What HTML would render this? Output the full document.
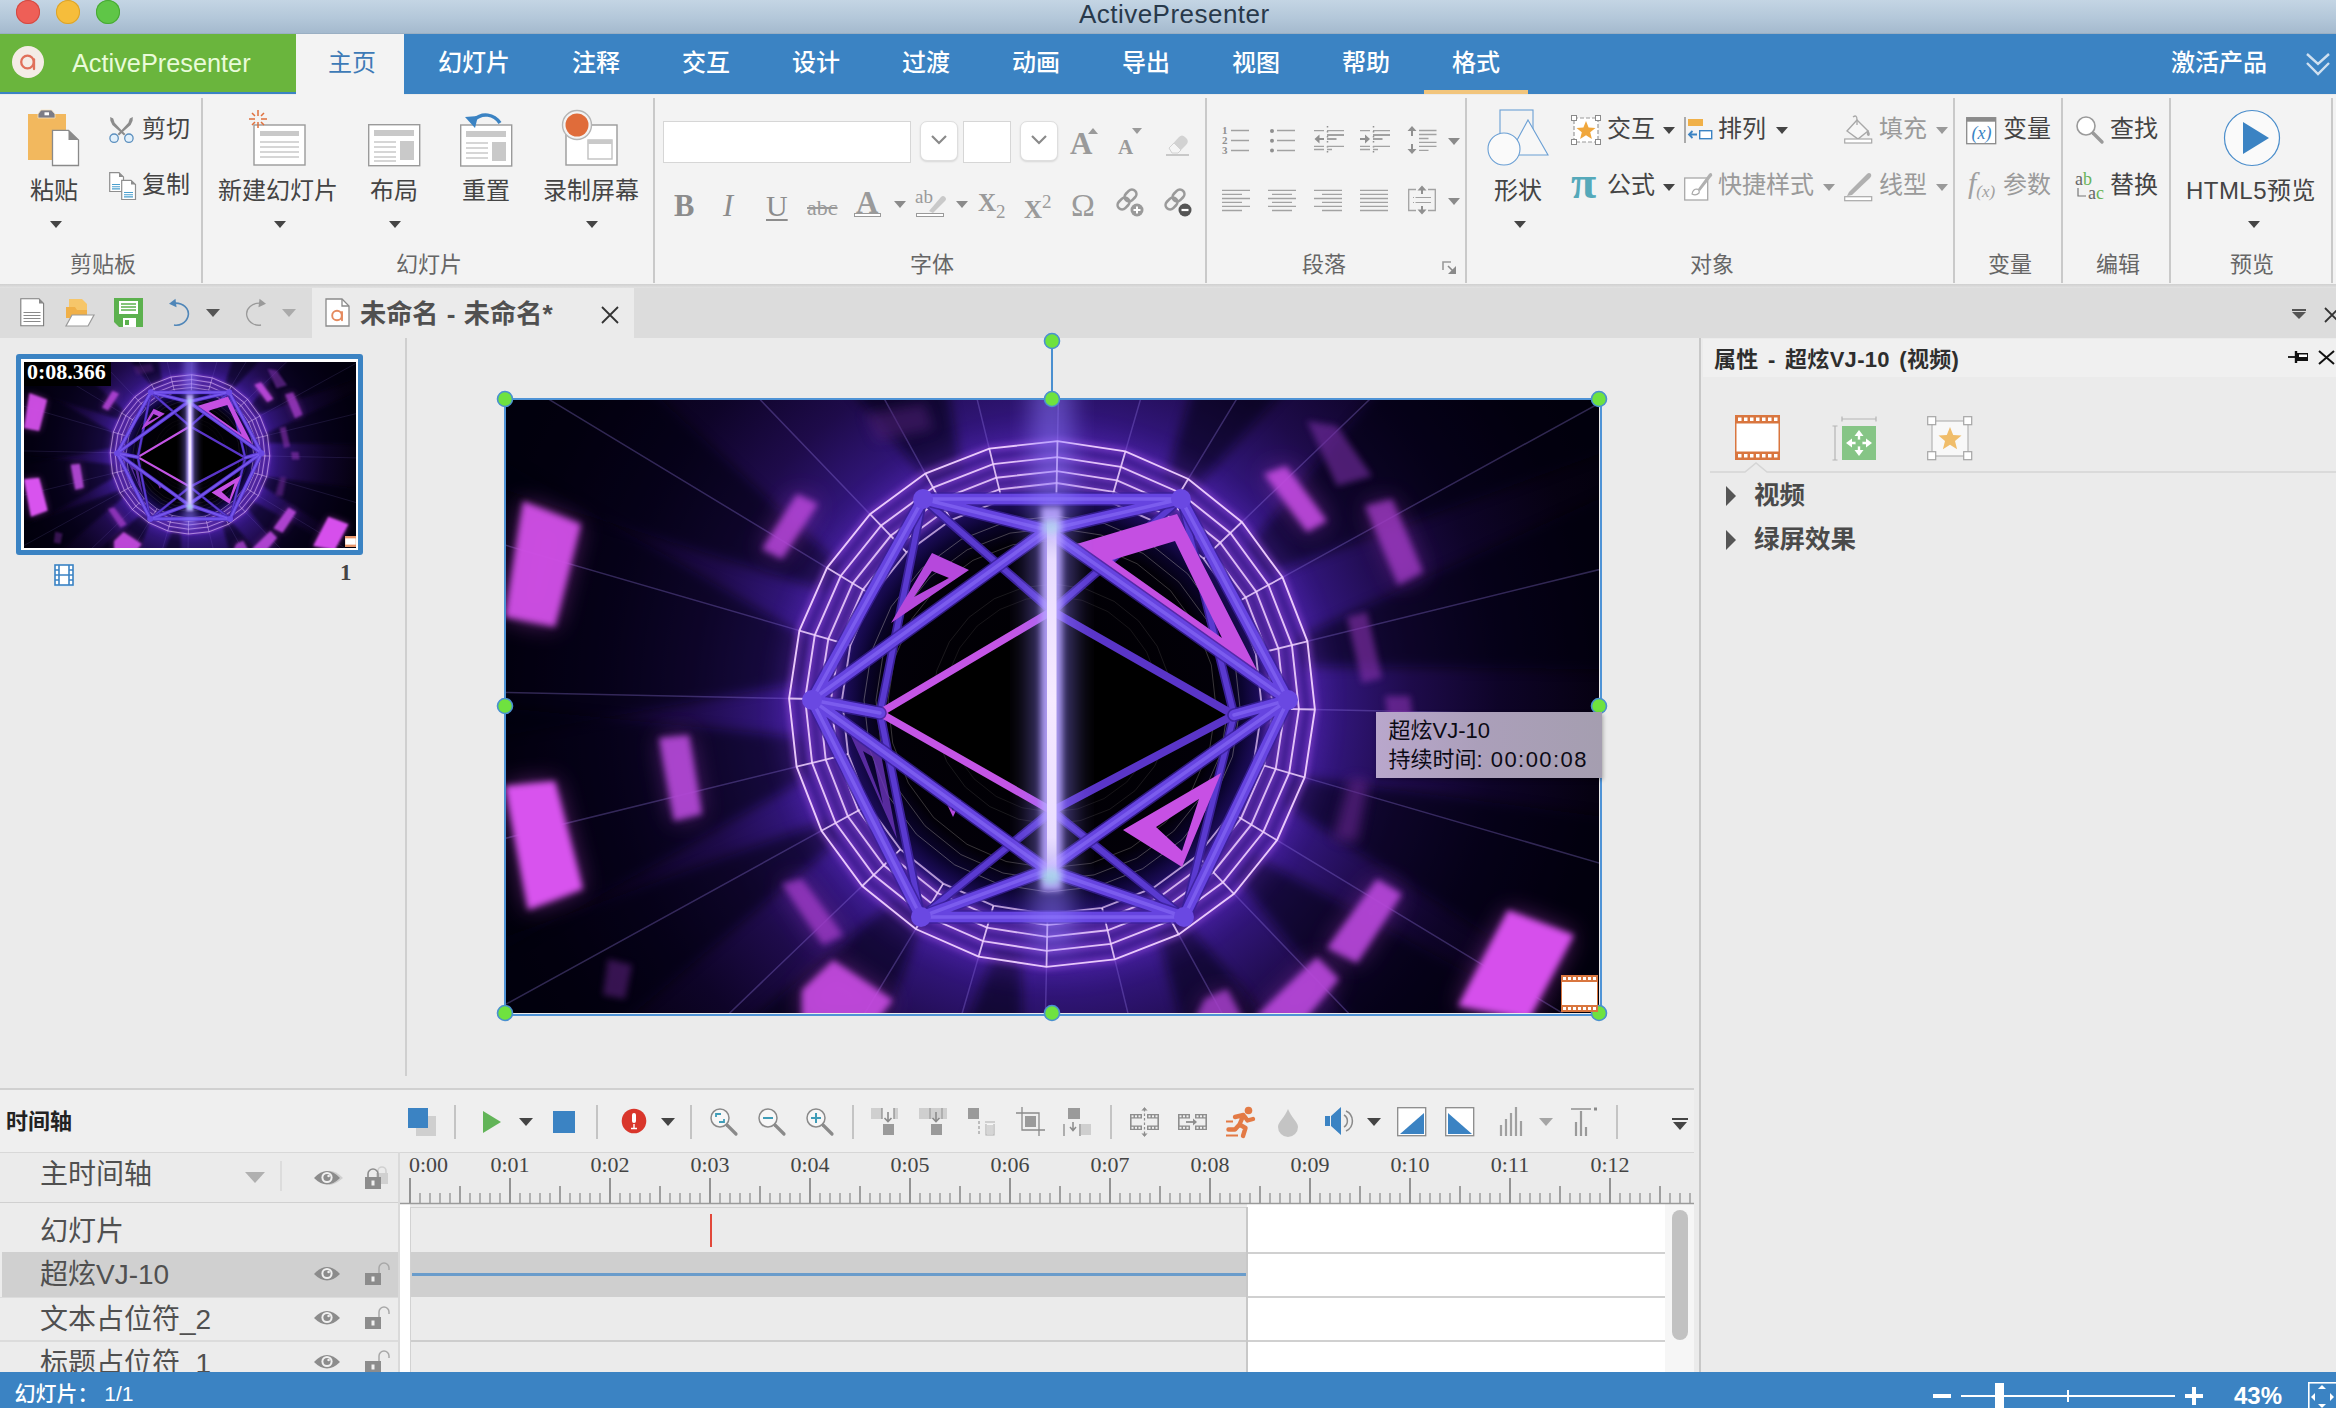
<!DOCTYPE html>
<html lang="zh"><head><meta charset="utf-8"><title>ActivePresenter</title>
<style>
html,body{margin:0;padding:0}
body{width:2336px;height:1408px;position:relative;overflow:hidden;background:#ebebeb;font-family:"Liberation Sans","Noto Sans CJK SC",sans-serif;color:#333}
.a{position:absolute}
.t{position:absolute;white-space:nowrap;line-height:1}
svg{position:absolute;overflow:visible}
.serif{font-family:"Liberation Serif","Noto Serif CJK SC",serif}
.vsep{position:absolute;width:2px;background:#c9c9c9}
.rl{font-size:24px;color:#444}
.gl{font-size:22px;color:#666}
.dis{color:#9a9a9a}
.mt{font-size:24px;color:#fff;top:51px;font-weight:500}
.arr{position:absolute;width:0;height:0;border-left:6px solid transparent;border-right:6px solid transparent;border-top:7px solid #444}
.arrg{border-top-color:#999}
.tl{font-size:28px;color:#505050}
.rt{font-size:22px;color:#444;font-family:"Liberation Serif",serif}
</style></head><body>
<!-- title bar -->
<div class="a" style="left:0;top:0;width:2336px;height:34px;background:linear-gradient(#c4d5e4 0%,#b3c7d9 55%,#a5bace 96%,#94a9bd 100%)"></div>
<div class="a" style="left:16px;top:0;width:24px;height:24px;border-radius:50%;background:#ee5f57;box-shadow:inset 0 0 0 1px #d24a42"></div>
<div class="a" style="left:56px;top:0;width:24px;height:24px;border-radius:50%;background:#f6bd3b;box-shadow:inset 0 0 0 1px #dba32b"></div>
<div class="a" style="left:96px;top:0;width:24px;height:24px;border-radius:50%;background:#5fc647;box-shadow:inset 0 0 0 1px #47a835"></div>
<div class="t" style="left:1079px;top:0.5px;font-size:26px;letter-spacing:0.47px;color:#28394b">ActivePresenter</div>
<!-- menu bar -->
<div class="a" style="left:0;top:34px;width:2336px;height:60px;background:#3b83c3"></div>
<div class="a" style="left:0;top:34px;width:296px;height:58px;background:#6ab53d"></div>
<div class="a" style="left:296px;top:34px;width:108px;height:62px;background:#f3f3f3"></div>
<div class="a" style="left:1424px;top:90px;width:104px;height:4px;background:#f2c57c"></div>
<div class="a" style="left:12px;top:46px;width:32px;height:32px;border-radius:50%;background:#f4ece6"></div>
<svg style="left:12px;top:46px" width="32" height="32" viewBox="0 0 32 32"><circle cx="15.5" cy="16" r="6.3" fill="none" stroke="#e0705a" stroke-width="2.3"/><path d="M22 13.5V23" stroke="#e0705a" stroke-width="2.3" stroke-linecap="round"/></svg>
<div class="t" style="left:72px;top:51px;font-size:25.3px;color:#e9fbd9">ActivePresenter</div>
<div class="t mt" style="left:328px;color:#3d7ab6;font-weight:400">主页</div>
<div class="t mt" style="left:438px">幻灯片</div>
<div class="t mt" style="left:572px">注释</div>
<div class="t mt" style="left:682px">交互</div>
<div class="t mt" style="left:792px">设计</div>
<div class="t mt" style="left:902px">过渡</div>
<div class="t mt" style="left:1012px">动画</div>
<div class="t mt" style="left:1122px">导出</div>
<div class="t mt" style="left:1232px">视图</div>
<div class="t mt" style="left:1342px">帮助</div>
<div class="t mt" style="left:1452px">格式</div>
<div class="t mt" style="left:2171px">激活产品</div>
<svg style="left:2304px;top:50px" width="28" height="28" viewBox="0 0 28 28"><path d="M3 4 L14 14 L25 4 M3 13 L14 24 L25 13" fill="none" stroke="#cfe0f0" stroke-width="2.4"/></svg>
<!-- ribbon bg -->
<div class="a" style="left:0;top:95px;width:2336px;height:189px;background:#f3f3f3"></div>
<div class="a" style="left:0;top:284px;width:2336px;height:4px;background:linear-gradient(#cfcfcf,#e2e2e2)"></div>
<div class="vsep" style="left:201px;top:98px;height:185px"></div>
<div class="vsep" style="left:653px;top:98px;height:185px"></div>
<div class="vsep" style="left:1205px;top:98px;height:185px"></div>
<div class="vsep" style="left:1465px;top:98px;height:185px"></div>
<div class="vsep" style="left:1953px;top:98px;height:185px"></div>
<div class="vsep" style="left:2061px;top:98px;height:185px"></div>
<div class="vsep" style="left:2169px;top:98px;height:185px"></div>
<div class="vsep" style="left:2331px;top:98px;height:185px"></div>
<!-- toolbar row -->
<div class="a" style="left:0;top:288px;width:2336px;height:50px;background:#dcdcdc"></div>
<div class="a" style="left:312px;top:288px;width:322px;height:50px;background:#ebebeb"></div>
<!-- panels -->
<div class="a" style="left:405px;top:338px;width:2px;height:738px;background:#cfcfcf"></div>
<div class="a" style="left:1699px;top:338px;width:2px;height:1034px;background:#c8c8c8"></div>
<div class="a" style="left:1703px;top:339px;width:633px;height:38px;background:#f0f0f0"></div>
<!-- timeline -->
<div class="a" style="left:0;top:1088px;width:1694px;height:2px;background:#d0d0d0"></div>
<div class="a" style="left:0;top:1090px;width:1694px;height:62px;background:#efefef"></div>
<svg width="0" height="0" style="left:0;top:0"><defs>
<radialGradient id="gbg" cx="547" cy="305" r="620" gradientUnits="userSpaceOnUse">
<stop offset="0" stop-color="#22106a"/><stop offset="0.34" stop-color="#24116c"/><stop offset="0.43" stop-color="#361888"/><stop offset="0.48" stop-color="#2e1472"/><stop offset="0.58" stop-color="#1e0b4a"/><stop offset="0.72" stop-color="#0e0428"/><stop offset="0.88" stop-color="#060112"/><stop offset="1" stop-color="#03000c"/></radialGradient>
<radialGradient id="ghole" cx="547" cy="305" r="212" gradientUnits="userSpaceOnUse">
<stop offset="0" stop-color="#000"/><stop offset="0.78" stop-color="#020008"/><stop offset="0.9" stop-color="#0b0430"/><stop offset="0.97" stop-color="#180a50" stop-opacity="0.85"/><stop offset="1" stop-color="#2a1270" stop-opacity="0"/></radialGradient>
<linearGradient id="gbeam" x1="0" y1="0" x2="0" y2="1"><stop offset="0" stop-color="#fff" stop-opacity="0"/><stop offset="0.12" stop-color="#e9dcff"/><stop offset="0.5" stop-color="#f6eaff"/><stop offset="0.88" stop-color="#e9dcff"/><stop offset="1" stop-color="#fff" stop-opacity="0"/></linearGradient>
<linearGradient id="gdk" x1="0" y1="0" x2="1" y2="0"><stop offset="0" stop-color="#000" stop-opacity="0.55"/><stop offset="0.25" stop-color="#000" stop-opacity="0"/><stop offset="0.8" stop-color="#000" stop-opacity="0"/><stop offset="1" stop-color="#000" stop-opacity="0.45"/></linearGradient>
<filter id="b3" x="-30%" y="-30%" width="160%" height="160%"><feGaussianBlur stdDeviation="3"/></filter>
<filter id="b6" x="-30%" y="-30%" width="160%" height="160%"><feGaussianBlur stdDeviation="6"/></filter>
<filter id="b12" x="-50%" y="-50%" width="200%" height="200%"><feGaussianBlur stdDeviation="12"/></filter>
<filter id="b1" x="-10%" y="-10%" width="120%" height="120%"><feGaussianBlur stdDeviation="0.8"/></filter>
<clipPath id="cpv"><rect x="0" y="0" width="1094" height="614"/></clipPath>
<symbol id="vid" viewBox="0 0 1094 614" preserveAspectRatio="none"><g clip-path="url(#cpv)">
<rect width="1094" height="614" fill="#04000f"/>
<rect width="1094" height="614" fill="url(#gbg)"/>
<polygon points="293,284 -348,399 -262,-90 301,238" fill="#02000a" opacity="0.55" filter="url(#b6)"/>
<polygon points="319,191 -299,-3 -142,-274 334,165" fill="#02000a" opacity="0.55" filter="url(#b6)"/>
<polygon points="303,378 -262,700 -352,274 294,338" fill="#02000a" opacity="0.55" filter="url(#b6)"/>
<polygon points="745,145 1161,-353 1375,-47 766,174" fill="#02000a" opacity="0.55" filter="url(#b6)"/>
<polygon points="793,238 1381,-32 1446,274 799,267" fill="#02000a" opacity="0.55" filter="url(#b6)"/>
<polygon points="791,378 1433,461 1326,755 781,406" fill="#02000a" opacity="0.55" filter="url(#b6)"/>
<polygon points="751,458 1318,769 1137,984 733,479" fill="#02000a" opacity="0.55" filter="url(#b6)"/>
<polygon points="416,524 195,1133 -111,919 387,503" fill="#02000a" opacity="0.55" filter="url(#b6)"/>
<polygon points="332,443 -162,859 -287,642 320,422" fill="#02000a" opacity="0.55" filter="url(#b6)"/>
<polygon points="661,77 855,-541 1126,-384 687,92" fill="#02000a" opacity="0.55" filter="url(#b6)"/>
<polygon points="423,82 5,-414 345,-572 456,67" fill="#02000a" opacity="0.55" filter="url(#b6)"/>
<polygon points="680,523 1101,1014 825,1161 653,537" fill="#02000a" opacity="0.55" filter="url(#b6)"/>
<polygon points="516,558 531,1205 254,1156 490,553" fill="#02000a" opacity="0.55" filter="url(#b6)"/>
<path d="M808.9 310.5 L1246.8 319.7 M798.6 378.1 L1219.2 500.3 M771.1 440.7 L1145.8 667.6 M728.3 494.1 L1031.5 810.2 M673.2 534.6 L884.2 918.4 M609.5 559.4 L714.0 984.8 M541.5 566.9 L532.3 1004.8 M473.9 556.6 L351.7 977.2 M411.3 529.1 L184.4 903.8 M357.9 486.3 L41.8 789.5 M317.4 431.2 L-66.4 642.2 M292.6 367.5 L-132.8 472.0 M285.1 299.5 L-152.8 290.3 M295.4 231.9 L-125.2 109.7 M322.9 169.3 L-51.8 -57.6 M365.7 115.9 L62.5 -200.2 M420.8 75.4 L209.8 -308.4 M484.5 50.6 L380.0 -374.8 M552.5 43.1 L561.7 -394.8 M620.1 53.4 L742.3 -367.2 M682.7 80.9 L909.6 -293.8 M736.1 123.7 L1052.2 -179.5 M776.6 178.8 L1160.4 -32.2 M801.4 242.5 L1226.8 138.0" stroke="#a88cff" stroke-width="1.5" opacity="0.28" fill="none"/>
<polygon points="18,102 76,125 50,228 0,218" fill="#d04fe6" opacity="0.45" filter="url(#b12)"/>
<polygon points="18,102 76,125 50,228 0,218" fill="#d04fe6" opacity="0.95" filter="url(#b3)"/>
<polygon points="0,387 50,382 78,490 23,511" fill="#d852ee" opacity="0.45" filter="url(#b12)"/>
<polygon points="0,387 50,382 78,490 23,511" fill="#d852ee" opacity="1" filter="url(#b3)"/>
<polygon points="292,95 313,105 277,160 257,150" fill="#b545d8" opacity="0.45" filter="url(#b12)"/>
<polygon points="292,95 313,105 277,160 257,150" fill="#b545d8" opacity="0.85" filter="url(#b3)"/>
<polygon points="154,339 184,336 197,415 169,422" fill="#b548d8" opacity="0.45" filter="url(#b12)"/>
<polygon points="154,339 184,336 197,415 169,422" fill="#b548d8" opacity="0.9" filter="url(#b3)"/>
<polygon points="277,485 297,480 338,536 318,546" fill="#a03ac8" opacity="0.45" filter="url(#b12)"/>
<polygon points="277,485 297,480 338,536 318,546" fill="#a03ac8" opacity="0.75" filter="url(#b3)"/>
<polygon points="297,591 328,561 388,601 373,620 297,620" fill="#c74be2" opacity="0.45" filter="url(#b12)"/>
<polygon points="297,591 328,561 388,601 373,620 297,620" fill="#c74be2" opacity="0.9" filter="url(#b3)"/>
<polygon points="802,22 832,27 867,77 832,87" fill="#7a2ea8" opacity="0.6" filter="url(#b3)"/>
<polygon points="759,75 781,67 822,122 802,133" fill="#c048de" opacity="0.45" filter="url(#b12)"/>
<polygon points="759,75 781,67 822,122 802,133" fill="#c048de" opacity="0.9" filter="url(#b3)"/>
<polygon points="860,107 887,100 918,173 893,186" fill="#a23bc6" opacity="0.45" filter="url(#b12)"/>
<polygon points="860,107 887,100 918,173 893,186" fill="#a23bc6" opacity="0.75" filter="url(#b3)"/>
<polygon points="842,218 862,213 877,279 857,284" fill="#8a30b0" opacity="0.6" filter="url(#b3)"/>
<polygon points="880,297 905,297 908,322 883,322" fill="#8a30b0" opacity="0.6" filter="url(#b3)"/>
<polygon points="872,480 897,495 852,564 822,549" fill="#b846da" opacity="0.45" filter="url(#b12)"/>
<polygon points="872,480 897,495 852,564 822,549" fill="#b846da" opacity="0.9" filter="url(#b3)"/>
<polygon points="1003,511 1069,536 1024,620 953,607" fill="#d650ec" opacity="0.45" filter="url(#b12)"/>
<polygon points="1003,511 1069,536 1024,620 953,607" fill="#d650ec" opacity="1" filter="url(#b3)"/>
<polygon points="812,558 834,580 800,620 750,618" fill="#b846da" opacity="0.45" filter="url(#b12)"/>
<polygon points="812,558 834,580 800,620 750,618" fill="#b846da" opacity="0.9" filter="url(#b3)"/>
<polygon points="700,600 722,590 738,620 690,620" fill="#a840cc" opacity="0.45" filter="url(#b12)"/>
<polygon points="700,600 722,590 738,620 690,620" fill="#a840cc" opacity="0.8" filter="url(#b3)"/>
<polygon points="103,560 127,566 120,600 98,596" fill="#6a2890" opacity="0.5" filter="url(#b3)"/>
<polygon points="360,15 420,5 428,30 372,42" fill="#55207c" opacity="0.5" filter="url(#b6)"/>
<polygon points="845,379 864,381 852,443 828,440" fill="#6a2894" opacity="0.6" filter="url(#b6)"/>
<circle cx="547" cy="305" r="244" fill="none" stroke="#7a38d8" stroke-width="56" opacity="0.22" filter="url(#b12)"/>
<circle cx="547" cy="305" r="212" fill="url(#ghole)"/>
<g filter="url(#b3)" opacity="0.55"><polygon points="809.9,310.5 799.6,378.4 772.0,441.2 729.0,494.8 673.7,535.5 609.7,560.4 541.5,567.9 473.6,557.6 410.8,530.0 357.2,487.0 316.5,431.7 291.6,367.7 284.1,299.5 294.4,231.6 322.0,168.8 365.0,115.2 420.3,74.5 484.3,49.6 552.5,42.1 620.4,52.4 683.2,80.0 736.8,123.0 777.5,178.3 802.4,242.3" fill="none" stroke="#b45cff" stroke-width="5"/><polygon points="793.9,310.2 784.2,373.9 758.3,433.0 718.0,483.3 666.0,521.4 605.9,544.9 541.8,551.9 478.1,542.2 419.0,516.3 368.7,476.0 330.6,424.0 307.1,363.9 300.1,299.8 309.8,236.1 335.7,177.0 376.0,126.7 428.0,88.6 488.1,65.1 552.2,58.1 615.9,67.8 675.0,93.7 725.3,134.0 763.4,186.0 786.9,246.1" fill="none" stroke="#b45cff" stroke-width="5"/><polygon points="779.9,309.9 770.7,370.0 746.3,425.7 708.3,473.2 659.2,509.2 602.6,531.3 542.1,537.9 482.0,528.7 426.3,504.3 378.8,466.3 342.8,417.2 320.7,360.6 314.1,300.1 323.3,240.0 347.7,184.3 385.7,136.8 434.8,100.8 491.4,78.7 551.9,72.1 612.0,81.3 667.7,105.7 715.2,143.7 751.2,192.8 773.3,249.4" fill="none" stroke="#b45cff" stroke-width="5"/><polygon points="768.0,309.6 759.2,366.7 736.0,419.5 700.0,464.5 653.5,498.7 599.7,519.6 542.4,526.0 485.3,517.2 432.5,494.0 387.5,458.0 353.3,411.5 332.4,357.7 326.0,300.4 334.8,243.3 358.0,190.5 394.0,145.5 440.5,111.3 494.3,90.4 551.6,84.0 608.7,92.8 661.5,116.0 706.5,152.0 740.7,198.5 761.6,252.3" fill="none" stroke="#b45cff" stroke-width="5"/></g>
<polygon points="809.9,310.5 799.6,378.4 772.0,441.2 729.0,494.8 673.7,535.5 609.7,560.4 541.5,567.9 473.6,557.6 410.8,530.0 357.2,487.0 316.5,431.7 291.6,367.7 284.1,299.5 294.4,231.6 322.0,168.8 365.0,115.2 420.3,74.5 484.3,49.6 552.5,42.1 620.4,52.4 683.2,80.0 736.8,123.0 777.5,178.3 802.4,242.3" fill="none" stroke="#f0d2ff" stroke-width="1.9" opacity="0.95"/>
<polygon points="793.9,310.2 784.2,373.9 758.3,433.0 718.0,483.3 666.0,521.4 605.9,544.9 541.8,551.9 478.1,542.2 419.0,516.3 368.7,476.0 330.6,424.0 307.1,363.9 300.1,299.8 309.8,236.1 335.7,177.0 376.0,126.7 428.0,88.6 488.1,65.1 552.2,58.1 615.9,67.8 675.0,93.7 725.3,134.0 763.4,186.0 786.9,246.1" fill="none" stroke="#f0d2ff" stroke-width="1.9" opacity="0.9"/>
<polygon points="779.9,309.9 770.7,370.0 746.3,425.7 708.3,473.2 659.2,509.2 602.6,531.3 542.1,537.9 482.0,528.7 426.3,504.3 378.8,466.3 342.8,417.2 320.7,360.6 314.1,300.1 323.3,240.0 347.7,184.3 385.7,136.8 434.8,100.8 491.4,78.7 551.9,72.1 612.0,81.3 667.7,105.7 715.2,143.7 751.2,192.8 773.3,249.4" fill="none" stroke="#f0d2ff" stroke-width="1.9" opacity="0.85"/>
<polygon points="768.0,309.6 759.2,366.7 736.0,419.5 700.0,464.5 653.5,498.7 599.7,519.6 542.4,526.0 485.3,517.2 432.5,494.0 387.5,458.0 353.3,411.5 332.4,357.7 326.0,300.4 334.8,243.3 358.0,190.5 394.0,145.5 440.5,111.3 494.3,90.4 551.6,84.0 608.7,92.8 661.5,116.0 706.5,152.0 740.7,198.5 761.6,252.3" fill="none" stroke="#f0d2ff" stroke-width="1.9" opacity="0.8"/>
<polygon points="757.0,309.4 748.7,363.6 726.6,413.8 692.4,456.6 648.2,489.0 597.1,508.9 542.6,515.0 488.4,506.7 438.2,484.6 395.4,450.4 363.0,406.2 343.1,355.1 337.0,300.6 345.3,246.4 367.4,196.2 401.6,153.4 445.8,121.0 496.9,101.1 551.4,95.0 605.6,103.3 655.8,125.4 698.6,159.6 731.0,203.8 750.9,254.9" fill="none" stroke="#f0d2ff" stroke-width="1.9" opacity="0.7"/>
<path d="M757.0 309.4 L809.9 310.5 M748.7 363.6 L799.6 378.4 M726.6 413.8 L772.0 441.2 M692.4 456.6 L729.0 494.8 M648.2 489.0 L673.7 535.5 M597.1 508.9 L609.7 560.4 M542.6 515.0 L541.5 567.9 M488.4 506.7 L473.6 557.6 M438.2 484.6 L410.8 530.0 M395.4 450.4 L357.2 487.0 M363.0 406.2 L316.5 431.7 M343.1 355.1 L291.6 367.7 M337.0 300.6 L284.1 299.5 M345.3 246.4 L294.4 231.6 M367.4 196.2 L322.0 168.8 M401.6 153.4 L365.0 115.2 M445.8 121.0 L420.3 74.5 M496.9 101.1 L484.3 49.6 M551.4 95.0 L552.5 42.1 M605.6 103.3 L620.4 52.4 M655.8 125.4 L683.2 80.0 M698.6 159.6 L736.8 123.0 M731.0 203.8 L777.5 178.3 M750.9 254.9 L802.4 242.3" stroke="#f0d2ff" stroke-width="1.8" opacity="0.85" fill="none"/>
<polygon points="735.0,308.9 727.5,357.5 707.8,402.4 677.1,440.7 637.6,469.7 591.8,487.6 543.1,493.0 494.5,485.5 449.6,465.8 411.3,435.1 382.3,395.6 364.4,349.8 359.0,301.1 366.5,252.5 386.2,207.6 416.9,169.3 456.4,140.3 502.2,122.4 550.9,117.0 599.5,124.5 644.4,144.2 682.7,174.9 711.7,214.4 729.6,260.2" fill="none" stroke="#d8d0c8" stroke-width="1" opacity="0.35"/>
<polygon points="723.0,308.7 716.0,354.1 697.5,396.2 668.8,432.0 631.8,459.2 589.0,475.9 543.3,481.0 497.9,474.0 455.8,455.5 420.0,426.8 392.8,389.8 376.1,347.0 371.0,301.3 378.0,255.9 396.5,213.8 425.2,178.0 462.2,150.8 505.0,134.1 550.7,129.0 596.1,136.0 638.2,154.5 674.0,183.2 701.2,220.2 717.9,263.0" fill="none" stroke="#d8d0c8" stroke-width="1" opacity="0.3"/>
<polygon points="711.0,308.4 704.5,350.8 687.3,390.0 660.5,423.4 626.0,448.7 586.1,464.3 543.6,469.0 501.2,462.5 462.0,445.3 428.6,418.5 403.3,384.0 387.7,344.1 383.0,301.6 389.5,259.2 406.7,220.0 433.5,186.6 468.0,161.3 507.9,145.7 550.4,141.0 592.8,147.5 632.0,164.7 665.4,191.5 690.7,226.0 706.3,265.9" fill="none" stroke="#d8d0c8" stroke-width="1" opacity="0.25"/>
<polygon points="667.0,307.5 662.2,338.5 649.6,367.2 630.1,391.6 604.8,410.2 575.6,421.5 544.5,425.0 513.5,420.2 484.8,407.6 460.4,388.1 441.8,362.8 430.5,333.6 427.0,302.5 431.8,271.5 444.4,242.8 463.9,218.4 489.2,199.8 518.4,188.5 549.5,185.0 580.5,189.8 609.2,202.4 633.6,221.9 652.2,247.2 663.5,276.4" fill="none" stroke="#d8d0c8" stroke-width="1" opacity="0.12"/>
<polygon points="655.0,307.3 650.7,335.1 639.4,360.9 621.8,383.0 599.0,399.6 572.8,409.9 544.7,413.0 516.9,408.7 491.1,397.4 469.0,379.8 452.4,357.0 442.1,330.8 439.0,302.7 443.3,274.9 454.6,249.1 472.2,227.0 495.0,210.4 521.2,200.1 549.3,197.0 577.1,201.3 602.9,212.6 625.0,230.2 641.6,253.0 651.9,279.2" fill="none" stroke="#d8d0c8" stroke-width="1" opacity="0.1"/>
<polygon points="375,314 547,212 729,316 547,412" fill="#000"/>
<path d="M418 100 L547 212 M676 100 L547 212 M416 518 L547 412 M679 518 L547 412 M418 100 L375 314 M416 518 L375 314 M676 100 L729 316 M679 518 L729 316" stroke="#3a2098" stroke-width="9" stroke-linecap="round" fill="none"/><path d="M418 100 L547 212 M676 100 L547 212 M416 518 L547 412 M679 518 L547 412 M418 100 L375 314 M416 518 L375 314 M676 100 L729 316 M679 518 L729 316" stroke="#5a3ad0" stroke-width="5.5" stroke-linecap="round" fill="none"/>
<path d="M565 147 L672 115 L753 273 Z M607 161 L670 142 L717 239 Z" fill="#c44fe2" fill-rule="evenodd" opacity="1"/>
<path d="M618 431 L716 374 L677 468 Z M651 428 L694 400 L677 452 Z" fill="#c750e4" fill-rule="evenodd" opacity="1"/>
<path d="M386 224 L427 154 L464 171 Z M409 198 L427 172 L444 179 Z" fill="#b648dc" fill-rule="evenodd" opacity="1"/>
<path d="M345 335 L375 350 L392 440 Z M358 352 L368 358 L378 405 Z" fill="#6a34b8" fill-rule="evenodd" opacity="0.8"/>
<path d="M440 401 L456 401 L448 418 Z M445 405 L451 405 L448 412 Z" fill="#b648dc" fill-rule="evenodd" opacity="1"/>
<path d="M375 314 L547 212 M375 314 L547 412" stroke="#c455e6" stroke-width="7.5" stroke-linecap="round" fill="none"/>
<path d="M729 316 L547 212 M729 316 L547 412" stroke="#5a35c8" stroke-width="8" stroke-linecap="round" fill="none"/>
<path d="M307 301 L418 100 M418 100 L676 100 M676 100 L783 301 M783 301 L679 518 M679 518 L416 518 M416 518 L307 301 M307 301 L542 131 M542 131 L783 301 M307 301 L542 471 M542 471 L783 301 M418 100 L542 131 M676 100 L542 131 M416 518 L542 471 M679 518 L542 471 M307 301 L375 314 M783 301 L729 316" stroke="#3a1f9a" stroke-width="13.5" stroke-linecap="round" fill="none" opacity="0.8"/>
<path d="M307 301 L418 100 M418 100 L676 100 M676 100 L783 301 M783 301 L679 518 M679 518 L416 518 M416 518 L307 301 M307 301 L542 131 M542 131 L783 301 M307 301 L542 471 M542 471 L783 301 M418 100 L542 131 M676 100 L542 131 M416 518 L542 471 M679 518 L542 471 M307 301 L375 314 M783 301 L729 316" stroke="#6644e0" stroke-width="10.5" stroke-linecap="round" fill="none"/>
<path d="M307 301 L418 100 M418 100 L676 100 M676 100 L783 301 M783 301 L679 518 M679 518 L416 518 M416 518 L307 301 M307 301 L542 131 M542 131 L783 301 M307 301 L542 471 M542 471 L783 301 M418 100 L542 131 M676 100 L542 131 M416 518 L542 471 M679 518 L542 471 M307 301 L375 314 M783 301 L729 316" stroke="#8466f4" stroke-width="3.5" stroke-linecap="round" fill="none" opacity="0.7"/>
<circle cx="307" cy="301" r="10" fill="#6a48e2"/>
<circle cx="783" cy="301" r="10" fill="#6a48e2"/>
<circle cx="418" cy="100" r="10" fill="#6a48e2"/>
<circle cx="676" cy="100" r="10" fill="#6a48e2"/>
<circle cx="416" cy="518" r="10" fill="#6a48e2"/>
<circle cx="679" cy="518" r="10" fill="#6a48e2"/>
<rect x="526" y="-20" width="42" height="570" fill="#8f7cff" opacity="0.5" filter="url(#b12)"/>
<rect x="536" y="108" width="21" height="384" fill="#b9a6ff" opacity="0.9" filter="url(#b3)"/>
<rect x="542" y="118" width="9.5" height="364" rx="3" fill="url(#gbeam)"/>
<ellipse cx="546" cy="478" rx="10" ry="8" fill="#9ff0e0" opacity="0.55" filter="url(#b3)"/>
<ellipse cx="546" cy="128" rx="9" ry="7" fill="#9ff0e0" opacity="0.4" filter="url(#b3)"/>
</g></symbol></defs></svg>
<!-- ===== ribbon: clipboard ===== -->
<svg style="left:27px;top:109px" width="54" height="58" viewBox="0 0 54 58"><rect x="1" y="5" width="38" height="46" fill="#f2b85e"/><path d="M11 9 V5 L14 1 H24.5 L28 5 V9 Z" fill="#7c7c86" stroke="#f7e3c0" stroke-width="0.8"/><rect x="17.5" y="3.3" width="4.5" height="3" fill="#fff"/><path d="M25.5 21.3 H41.5 L51.5 31 V56.5 H25.5 Z" fill="#fff" stroke="#8a8a8a" stroke-width="1.3"/><path d="M41.5 21.3 V31 H51.5 Z" fill="#8a8a8a"/></svg>
<div class="t rl" style="left:30px;top:179px">粘贴</div>
<div class="arr" style="left:50px;top:221px"></div>
<svg style="left:108px;top:116px" width="28" height="28" viewBox="0 0 28 28"><polygon points="2.2,1 5.2,2.6 6.6,6.8 13.8,14.4 17.4,18 16,19.4 12,15.8 4.4,9 2.4,4.8" fill="#8c8c8c"/><polygon points="24.8,1 21.8,2.6 20.4,6.8 13.2,14.4 9.6,18 11,19.4 15,15.8 22.6,9 24.6,4.8" fill="#8c8c8c"/><circle cx="6.1" cy="22.2" r="4.2" fill="#e2f0fb" stroke="#5b8fbe" stroke-width="1.3"/><circle cx="20.9" cy="22.2" r="4.2" fill="#e2f0fb" stroke="#5b8fbe" stroke-width="1.3"/></svg>
<div class="t rl" style="left:142px;top:117px">剪切</div>
<svg style="left:109px;top:172px" width="28" height="29" viewBox="0 0 28 29"><path d="M0.7 0.7 H10 L14.5 5 V19.5 H0.7 Z" fill="#fff" stroke="#8e8e8e" stroke-width="1.2"/><path d="M10 0.7 V5 H14.5Z" fill="#8e8e8e"/><path d="M3 12.5 H11 M3 14.7 H11 M3 16.9 H11" stroke="#4a9fce" stroke-width="1.1"/><path d="M12.7 8.3 H22 L26.5 12.6 V27.5 H12.7 Z" fill="#fff" stroke="#8e8e8e" stroke-width="1.2"/><path d="M22 8.3 V12.6 H26.5Z" fill="#8e8e8e"/><path d="M15 20.5 H24 M15 22.7 H24 M15 24.9 H24" stroke="#4a9fce" stroke-width="1.1"/></svg>
<div class="t rl" style="left:142px;top:173px">复制</div>
<div class="t gl" style="left:70px;top:254px">剪贴板</div>
<!-- ===== slides group ===== -->
<svg style="left:248px;top:108px" width="60" height="60" viewBox="0 0 60 60"><rect x="6" y="17" width="51" height="40" fill="#fff" stroke="#9a9a9a" stroke-width="1.4"/><rect x="12" y="23" width="39" height="5" fill="#c9c9c9"/><path d="M12 34H51M12 39H51M12 44H51M12 49H51" stroke="#c9c9c9" stroke-width="1.4"/><path d="M10 2V8M10 14V20M1 11H7M13 11H19M4 5L7 8M13 14L16 17M16 5L13 8M7 14L4 17" stroke="#e0703c" stroke-width="1.5"/></svg>
<div class="t rl" style="left:218px;top:179px">新建幻灯片</div>
<div class="arr" style="left:274px;top:221px"></div>
<svg style="left:368px;top:124px" width="53" height="43" viewBox="0 0 53 43"><rect x="0.7" y="0.7" width="51" height="41" fill="#fff" stroke="#9a9a9a" stroke-width="1.4"/><rect x="6" y="6" width="40" height="6" fill="#c9c9c9"/><path d="M6 18H28M6 23H28M6 28H28M6 33H28M6 37H28" stroke="#c9c9c9" stroke-width="1.4"/><rect x="32" y="17" width="14" height="19" fill="#c9c9c9"/></svg>
<div class="t rl" style="left:370px;top:179px">布局</div>
<div class="arr" style="left:389px;top:221px"></div>
<svg style="left:460px;top:112px" width="53" height="56" viewBox="0 0 53 56"><rect x="0.7" y="13" width="51" height="41" fill="#fff" stroke="#9a9a9a" stroke-width="1.4"/><rect x="6" y="19" width="40" height="6" fill="#c9c9c9"/><path d="M6 31H28M6 36H28M6 41H28M6 46H28" stroke="#c9c9c9" stroke-width="1.4"/><rect x="32" y="30" width="14" height="19" fill="#c9c9c9"/><path d="M14 8 C22 0 34 2 40 11" fill="none" stroke="#3b83c3" stroke-width="3.5"/><path d="M5 5 L18 4 L15 16 Z" fill="#3b83c3"/></svg>
<div class="t rl" style="left:462px;top:179px">重置</div>
<svg style="left:560px;top:108px" width="60" height="60" viewBox="0 0 60 60"><rect x="6" y="17" width="51" height="40" fill="#fff" stroke="#9a9a9a" stroke-width="1.4"/><rect x="28" y="32" width="24" height="19" fill="#fff" stroke="#c0c0c0" stroke-width="1.4"/><rect x="28" y="32" width="24" height="4" fill="#c9c9c9"/><circle cx="17" cy="17" r="14.5" fill="#f3f3f3" stroke="#b5b5b5" stroke-width="1.4"/><circle cx="17" cy="17" r="11.5" fill="#e06c3a"/></svg>
<div class="t rl" style="left:543px;top:179px">录制屏幕</div>
<div class="arr" style="left:586px;top:221px"></div>
<div class="t gl" style="left:396px;top:254px">幻灯片</div>
<!-- ===== font group ===== -->
<div class="a" style="left:663px;top:121px;width:248px;height:41.5px;background:#fff;border:1.5px solid #d6d6d6;box-sizing:border-box"></div>
<div class="a" style="left:920px;top:121px;width:38px;height:40px;background:#fff;border:1px solid #dedede;border-radius:7px;box-sizing:border-box;box-shadow:0 1px 2px rgba(0,0,0,0.12)"></div>
<svg style="left:930px;top:134px" width="18" height="12" viewBox="0 0 18 12"><path d="M2 2 L9 9 L16 2" fill="none" stroke="#8a8a8a" stroke-width="2.2"/></svg>
<div class="a" style="left:963px;top:121px;width:48px;height:41.5px;background:#fff;border:1.5px solid #d6d6d6;box-sizing:border-box"></div>
<div class="a" style="left:1020px;top:121px;width:38px;height:40px;background:#fff;border:1px solid #dedede;border-radius:7px;box-sizing:border-box;box-shadow:0 1px 2px rgba(0,0,0,0.12)"></div>
<svg style="left:1030px;top:134px" width="18" height="12" viewBox="0 0 18 12"><path d="M2 2 L9 9 L16 2" fill="none" stroke="#8a8a8a" stroke-width="2.2"/></svg>
<div class="t serif" style="left:1070px;top:128px;font-size:31px;font-weight:bold;color:#9a9a9a">A</div>
<div class="arr" style="left:1088px;top:128px;border-top:none;border-bottom:6px solid #9a9a9a;border-left-width:5px;border-right-width:5px"></div>
<div class="t serif" style="left:1118px;top:137px;font-size:21px;font-weight:bold;color:#9a9a9a">A</div>
<div class="arr" style="left:1132px;top:128px;border-top:6px solid #9a9a9a;border-left-width:5px;border-right-width:5px"></div>
<svg style="left:1165px;top:133px" width="26" height="24" viewBox="0 0 26 24"><path d="M4 15 L14 4 Q17 1 20 4 L22 6 Q24 9 21 12 L13 20 H7 Z" fill="#d2d2d2"/><path d="M4 15 L9 10 L16 17 L13 20 H7 Z" fill="#f5f5f5" stroke="#d2d2d2" stroke-width="1"/><path d="M1 22 H24" stroke="#bdbdbd" stroke-width="1.6"/></svg>
<div class="t serif" style="left:674px;top:191px;font-size:30.5px;font-weight:bold;color:#8c8c8c">B</div>
<div class="t serif" style="left:723px;top:191px;font-size:30.5px;font-style:italic;color:#8c8c8c">I</div>
<div class="t serif" style="left:766px;top:191px;font-size:30px;color:#8c8c8c;text-decoration:underline;text-decoration-thickness:2px;text-underline-offset:3px">U</div>
<div class="t serif" style="left:807px;top:197px;font-size:22px;color:#9a9a9a;text-decoration:line-through">abc</div>
<div class="t serif" style="left:856px;top:187px;font-size:31px;font-weight:bold;color:#9a9a9a">A</div>
<div class="a" style="left:854px;top:213px;width:27px;height:4px;border:1px solid #9a9a9a;box-sizing:border-box;background:#fff"></div>
<div class="arr arrg" style="left:894px;top:201px;border-top-color:#8a8a8a"></div>
<div class="t serif" style="left:915px;top:187px;font-size:19px;color:#9a9a9a">ab</div>
<svg style="left:926px;top:194px" width="22" height="20" viewBox="0 0 22 20"><path d="M3 17 L15 3 Q17 1 19 3 Q21 5 19 7 L7 19 Z" fill="#c9c9c9"/></svg>
<div class="a" style="left:916px;top:213px;width:28px;height:4px;border:1px solid #9a9a9a;box-sizing:border-box;background:#fff"></div>
<div class="arr arrg" style="left:956px;top:201px;border-top-color:#8a8a8a"></div>
<div class="t serif" style="left:978px;top:190px;font-size:25px;font-weight:bold;color:#9a9a9a">X<span style="font-size:19px;font-weight:normal;position:relative;top:7px">2</span></div>
<div class="t serif" style="left:1024px;top:197px;font-size:25px;font-weight:bold;color:#9a9a9a">X<span style="font-size:19px;font-weight:normal;position:relative;top:-10px">2</span></div>
<div class="t serif" style="left:1071px;top:189px;font-size:32px;color:#9a9a9a">Ω</div>
<svg style="left:1116px;top:189px" width="30" height="30" viewBox="0 0 30 30"><g fill="none" stroke="#9a9a9a" stroke-width="2.6"><rect x="10" y="0" width="9" height="13" rx="4.5" transform="rotate(45 14.5 6.5)"/><rect x="3" y="8" width="9" height="13" rx="4.5" transform="rotate(45 7.5 14.5)"/></g><circle cx="21" cy="21" r="6.5" fill="#9a9a9a"/><path d="M17.5 21H24.5M21 17.5V24.5" stroke="#fff" stroke-width="2"/></svg>
<svg style="left:1164px;top:189px" width="30" height="30" viewBox="0 0 30 30"><g fill="none" stroke="#9a9a9a" stroke-width="2.6"><rect x="10" y="0" width="9" height="13" rx="4.5" transform="rotate(45 14.5 6.5)"/><rect x="3" y="8" width="9" height="13" rx="4.5" transform="rotate(45 7.5 14.5)"/></g><circle cx="21" cy="21" r="6.5" fill="#555"/><path d="M17.5 21H24.5" stroke="#fff" stroke-width="2.2"/></svg>
<div class="t gl" style="left:910px;top:254px">字体</div>
<!-- ===== paragraph group ===== -->
<svg style="left:1221px;top:124px" width="30" height="32" viewBox="0 0 30 32"><path d="M10 6.5H28M10 16.4H28M10 26.4H28" stroke="#a2a2a2" stroke-width="1.5"/><g font-family="Liberation Serif, serif" font-weight="bold" font-size="11" fill="#909090"><text x="1" y="10">1</text><text x="1" y="20">2</text><text x="1" y="30">3</text></g></svg>
<svg style="left:1268px;top:124px" width="30" height="32" viewBox="0 0 30 32"><path d="M9 6.5H27M9 16.4H27M9 26.4H27" stroke="#a2a2a2" stroke-width="1.5"/><circle cx="4" cy="7" r="2" fill="#909090"/><circle cx="4" cy="16.8" r="2" fill="#909090"/><circle cx="4" cy="26.6" r="2" fill="#909090"/></svg>
<svg style="left:1314px;top:124px" width="31" height="32" viewBox="0 0 31 32"><path d="M13.5 2V29" stroke="#909090" stroke-width="1.5" stroke-dasharray="1.6 3.4"/><path d="M0 6.6H10M13 6.6H30M0 22.4H10M13 22.4H30M0 25.5H10M13 25.5H18" stroke="#a2a2a2" stroke-width="1.3"/><path d="M13 11H30M13 15H22.5" stroke="#a2a2a2" stroke-width="2.2"/><path d="M10 15H3" stroke="#909090" stroke-width="2"/><path d="M5.5 10.5L0.5 15L5.5 19.5Z" fill="#909090"/></svg>
<svg style="left:1360px;top:124px" width="31" height="32" viewBox="0 0 31 32"><path d="M13.5 2V29" stroke="#909090" stroke-width="1.5" stroke-dasharray="1.6 3.4"/><path d="M0 6.6H10M13 6.6H30M0 22.4H10M13 22.4H30M0 25.5H10M13 25.5H18" stroke="#a2a2a2" stroke-width="1.3"/><path d="M13 11H30M13 15H22.5" stroke="#a2a2a2" stroke-width="2.2"/><path d="M0 15H7" stroke="#909090" stroke-width="2"/><path d="M5 10.5L10 15L5 19.5Z" fill="#909090"/></svg>
<svg style="left:1406px;top:124px" width="32" height="32" viewBox="0 0 32 32"><path d="M13 6.5H30.5M13 10.5H30.5M13 14.5H22.5M13 18.4H30.5M13 22.4H30.5M13 26.4H22.5" stroke="#a2a2a2" stroke-width="1.3"/><path d="M6 4V12M6 20V28" stroke="#909090" stroke-width="2"/><path d="M1.5 7L6 2L10.5 7ZM1.5 25L6 30L10.5 25Z" fill="#909090"/></svg>
<div class="arr arrg" style="left:1448px;top:138px;border-top-color:#8a8a8a"></div>
<svg style="left:1222px;top:189px" width="28" height="23" viewBox="0 0 28 23"><path d="M0 1.3H28M0 5.4H20M0 9.5H28M0 13.3H20M0 17.4H28M0 21.5H20" stroke="#a2a2a2" stroke-width="1.3"/></svg>
<svg style="left:1268px;top:189px" width="28" height="23" viewBox="0 0 28 23"><path d="M0 1.3H28M4 5.4H24M0 9.5H28M4 13.3H24M0 17.4H28M4 21.5H24" stroke="#a2a2a2" stroke-width="1.3"/></svg>
<svg style="left:1314px;top:189px" width="28" height="23" viewBox="0 0 28 23"><path d="M0 1.3H28M8 5.4H28M0 9.5H28M8 13.3H28M0 17.4H28M8 21.5H28" stroke="#a2a2a2" stroke-width="1.3"/></svg>
<svg style="left:1360px;top:189px" width="28" height="23" viewBox="0 0 28 23"><path d="M0 1.3H28M0 5.4H28M0 9.5H28M0 13.3H28M0 17.4H28M0 21.5H28" stroke="#a2a2a2" stroke-width="1.3"/></svg>
<svg style="left:1408px;top:185px" width="28" height="30" viewBox="0 0 28 30"><path d="M8 4.5H0.7V25.5H8M20 4.5H27.3V25.5H20" fill="none" stroke="#a2a2a2" stroke-width="1.3"/><path d="M5 12.5H23M5 17.5H23" stroke="#a2a2a2" stroke-width="1.2" stroke-dasharray="1 1.5 18"/><path d="M14 3V9M14 27V21" stroke="#909090" stroke-width="2"/><path d="M9.5 5.5L14 0.5L18.5 5.5ZM9.5 24.5L14 29.5L18.5 24.5Z" fill="#909090"/></svg>
<div class="arr arrg" style="left:1448px;top:198px;border-top-color:#8a8a8a"></div>
<div class="t gl" style="left:1302px;top:254px">段落</div>
<svg style="left:1442px;top:261px" width="15" height="14" viewBox="0 0 15 14"><path d="M1 9V1H9" fill="none" stroke="#9a9a9a" stroke-width="1.6"/><path d="M14 5V13H6Z" fill="#8a8a8a"/><path d="M6 5L12 11" stroke="#8a8a8a" stroke-width="1.6"/></svg>
<!-- ===== object group ===== -->
<svg style="left:1487px;top:109px" width="62" height="58" viewBox="0 0 62 58"><rect x="13" y="1" width="33" height="33" fill="#f3f3f3" stroke="#6a9fd4" stroke-width="1.1"/><path d="M41 11 L61 46 H22 Z" fill="#f7f7f7" stroke="#6a9fd4" stroke-width="1.1"/><circle cx="17" cy="40" r="16" fill="#fafafa" stroke="#6a9fd4" stroke-width="1.1"/></svg>
<div class="t rl" style="left:1494px;top:179px">形状</div>
<div class="arr" style="left:1514px;top:221px"></div>
<svg style="left:1571px;top:115px" width="30" height="30" viewBox="0 0 30 30"><rect x="3" y="3" width="24" height="24" fill="#fff" stroke="#9a9a9a" stroke-width="1.2" stroke-dasharray="4 2"/><g fill="#fff" stroke="#8a8a8a" stroke-width="1"><rect x="0.5" y="0.5" width="5" height="5"/><rect x="24.5" y="0.5" width="5" height="5"/><rect x="0.5" y="24.5" width="5" height="5"/><rect x="24.5" y="24.5" width="5" height="5"/></g><path d="M15 6 L17.6 12.4 L24.5 12.9 L19.2 17.3 L20.9 24 L15 20.3 L9.1 24 L10.8 17.3 L5.5 12.9 L12.4 12.4 Z" fill="#f0a73c"/></svg>
<div class="t rl" style="left:1607px;top:117px">交互</div>
<div class="arr" style="left:1663px;top:127px"></div>
<svg style="left:1684px;top:116px" width="30" height="28" viewBox="0 0 30 28"><path d="M1 1V27" stroke="#7a7a7a" stroke-width="1.2"/><rect x="4" y="3" width="15" height="7" fill="#f0b048"/><rect x="15.7" y="14.7" width="12" height="8" fill="#fff" stroke="#3b83c3" stroke-width="1.4"/><path d="M13 18.5H5M8.5 15L5 18.5L8.5 22" stroke="#3b83c3" stroke-width="1.8" fill="none"/></svg>
<div class="t rl" style="left:1718px;top:117px">排列</div>
<div class="arr" style="left:1776px;top:127px"></div>
<svg style="left:1844px;top:115px" width="30" height="30" viewBox="0 0 30 30"><path d="M3 16 L13 5 L24 16 L14 24 Z" fill="#f7f7f7" stroke="#a8a8a8" stroke-width="1.4"/><path d="M9 2 Q13 -1 13 5 V10" fill="none" stroke="#a8a8a8" stroke-width="1.3"/><path d="M24 15 Q27 19 25 21 Q22 21 23 17 Z" fill="#a8a8a8"/><rect x="0.7" y="24" width="27" height="4" fill="#fff" stroke="#a8a8a8" stroke-width="1.2"/></svg>
<div class="t rl dis" style="left:1879px;top:117px">填充</div>
<div class="arr arrg" style="left:1936px;top:127px"></div>
<div class="t serif" style="left:1571px;top:160px;font-size:46px;font-weight:bold;color:#55a9ba">π</div>
<div class="t rl" style="left:1607px;top:173px">公式</div>
<div class="arr" style="left:1663px;top:184px"></div>
<svg style="left:1684px;top:172px" width="30" height="30" viewBox="0 0 30 30"><rect x="0.7" y="6" width="23" height="22" fill="#fff" stroke="#a8a8a8" stroke-width="1.3"/><path d="M14 17 L25 2 Q27 0 28 2 Q29 4 27 5 L16 19 Z" fill="#b0b0b0"/><path d="M8 22 Q9 17 13 17 Q16 18 15 21 Q12 24 8 22Z" fill="none" stroke="#a8a8a8" stroke-width="1.2"/></svg>
<div class="t rl dis" style="left:1718px;top:173px">快捷样式</div>
<div class="arr arrg" style="left:1823px;top:184px"></div>
<svg style="left:1844px;top:172px" width="30" height="30" viewBox="0 0 30 30"><path d="M5 20 L23 2 Q25 0 27 2 Q28 4 26 6 L8 23 L3 24 Z" fill="#b0b0b0"/><rect x="0.7" y="24.7" width="27" height="4" fill="#fff" stroke="#a8a8a8" stroke-width="1.2"/></svg>
<div class="t rl dis" style="left:1879px;top:173px">线型</div>
<div class="arr arrg" style="left:1936px;top:184px"></div>
<div class="t gl" style="left:1690px;top:254px">对象</div>
<!-- ===== variables ===== -->
<svg style="left:1966px;top:117px" width="31" height="28" viewBox="0 0 31 28"><rect x="0.7" y="0.7" width="29" height="26" fill="#fff" stroke="#8a8a8a" stroke-width="1.3"/><rect x="0.7" y="0.7" width="29" height="4" fill="#8a8a8a"/><text x="15.5" y="22" text-anchor="middle" font-family="Liberation Serif, serif" font-style="italic" font-size="18" fill="#3b83c3">(x)</text></svg>
<div class="t rl" style="left:2003px;top:117px">变量</div>
<div class="t serif" style="left:1968px;top:168px;font-size:30px;font-style:italic;color:#a0a0a0">f<span style="font-size:17px;position:relative;top:4px">(x)</span></div>
<div class="t rl dis" style="left:2003px;top:173px">参数</div>
<div class="t gl" style="left:1988px;top:254px">变量</div>
<!-- ===== edit ===== -->
<svg style="left:2075px;top:115px" width="30" height="30" viewBox="0 0 30 30"><circle cx="11" cy="11" r="9" fill="#fff" stroke="#9a9a9a" stroke-width="1.6"/><path d="M18 18 L27 27" stroke="#9a9a9a" stroke-width="3.4" stroke-linecap="round"/></svg>
<div class="t rl" style="left:2110px;top:117px">查找</div>
<div class="t serif" style="left:2075px;top:170px;font-size:18px;color:#666">a<span style="color:#6ab45a">b</span></div>
<div class="t serif" style="left:2088px;top:184px;font-size:18px;color:#666">a<span style="color:#6ab45a">c</span></div>
<svg style="left:2077px;top:188px" width="10" height="10" viewBox="0 0 10 10"><path d="M1 0V8H9" fill="none" stroke="#777" stroke-width="1.2"/></svg>
<div class="t rl" style="left:2110px;top:173px">替换</div>
<div class="t gl" style="left:2096px;top:254px">编辑</div>
<!-- ===== preview ===== -->
<svg style="left:2223px;top:109px" width="58" height="58" viewBox="0 0 58 58"><circle cx="29" cy="29" r="27.5" fill="#fafafa" stroke="#4a8dcb" stroke-width="1.2"/><path d="M20 13 L46 29 L20 45 Z" fill="#3b83c3"/></svg>
<div class="t rl" style="left:2186px;top:179px;letter-spacing:0.45px">HTML5预览</div>
<div class="arr" style="left:2248px;top:221px"></div>
<div class="t gl" style="left:2230px;top:254px">预览</div>
<!-- ===== quick toolbar ===== -->
<svg style="left:20px;top:298px" width="25" height="29" viewBox="0 0 25 29"><path d="M0.8 0.8H19L23.6 5.4V27.8H0.8Z" fill="#fff" stroke="#7d7d7d" stroke-width="1.1"/><path d="M19 0.8V5.4H23.6Z" fill="#8a8a8a"/><path d="M3.5 14.5H20.5M3.5 17.5H20.5M3.5 20.5H20.5M3.5 23.5H20.5" stroke="#8a8a8a" stroke-width="1.1"/></svg>
<svg style="left:65px;top:298px" width="30" height="29" viewBox="0 0 30 29"><path d="M4 1H17L22 6V18H4Z" fill="#f6c66a"/><path d="M1 9H10L12 12H22V20H1Z" fill="#f0b048"/><path d="M7 17H29L23 28H1Z" fill="#fff" stroke="#9a9a9a" stroke-width="1.2"/></svg>
<svg style="left:114px;top:298px" width="29" height="29" viewBox="0 0 29 29"><path d="M0 0H29V29H5L0 24Z" fill="#5cb14e"/><rect x="5" y="3" width="19" height="13" fill="#fff"/><path d="M7 6H22M7 9H22M7 12H22" stroke="#5cb14e" stroke-width="1.3"/><rect x="9" y="20" width="13" height="9" fill="#fff"/><rect x="11" y="22" width="4" height="5" fill="#5cb14e"/></svg>
<svg style="left:166px;top:298px" width="26" height="30" viewBox="0 0 26 30"><path d="M6 5.5 C17 3.5 24 11 22 18.5 C20 25.5 13 28 8 27" fill="none" stroke="#4f86b8" stroke-width="1.6"/><path d="M9.5 0.8L3 5.8L10.5 9.3Z" fill="#4f86b8"/></svg>
<div class="arr" style="left:206px;top:309px;border-left-width:7px;border-right-width:7px;border-top-width:8px;border-top-color:#555"></div>
<svg style="left:243px;top:298px" width="26" height="30" viewBox="0 0 26 30"><path d="M20 5.5 C9 3.5 2 11 4 18.5 C6 25.5 13 28 18 27" fill="none" stroke="#9a9a9a" stroke-width="1.3"/><path d="M16.5 0.8L23 5.8L15.5 9.3Z" fill="#9a9a9a"/></svg>
<div class="arr" style="left:282px;top:309px;border-left-width:7px;border-right-width:7px;border-top-width:8px;border-top-color:#aaa"></div>
<svg style="left:325px;top:298px" width="25" height="29" viewBox="0 0 25 29"><path d="M1 1H17L24 8V28H1Z" fill="#fff" stroke="#8a8a8a" stroke-width="1.3"/><path d="M17 1V8H24" fill="none" stroke="#8a8a8a" stroke-width="1.3"/><circle cx="12" cy="17.5" r="4.8" fill="none" stroke="#e58a5e" stroke-width="1.9"/><path d="M17 14V22.3" stroke="#e58a5e" stroke-width="1.9" stroke-linecap="round"/></svg>
<div class="t" style="left:360px;top:301px;font-size:26.2px;font-weight:700;color:#505050;word-spacing:1px">未命名 - 未命名*</div>
<svg style="left:601px;top:306px" width="18" height="18" viewBox="0 0 18 18"><path d="M1 1L17 17M17 1L1 17" stroke="#333" stroke-width="1.8"/></svg>
<div class="arr" style="left:2292px;top:312px;border-left-width:7px;border-right-width:7px;border-top-width:7px;border-top-color:#555"></div>
<div class="a" style="left:2292px;top:309px;width:14px;height:1.5px;background:#555"></div>
<svg style="left:2324px;top:307px" width="16" height="16" viewBox="0 0 16 16"><path d="M1 1L15 15M15 1L1 15" stroke="#333" stroke-width="1.8"/></svg>
<!-- ===== properties panel ===== -->
<div class="t" style="left:1714px;top:349px;font-size:22px;font-weight:bold;color:#2e2e2e;word-spacing:3px;letter-spacing:0.3px">属性 - 超炫VJ-10 (视频)</div>
<svg style="left:2288px;top:350px" width="21" height="14" viewBox="0 0 21 14"><path d="M0 7H8" stroke="#111" stroke-width="1.8"/><path d="M8 1V13" stroke="#111" stroke-width="2.4"/><rect x="9" y="3" width="11" height="8" fill="#111"/><rect x="11" y="4.5" width="8" height="2.5" fill="#fff"/></svg>
<svg style="left:2318px;top:350px" width="17" height="15" viewBox="0 0 17 15"><path d="M1 1L16 14M16 1L1 14" stroke="#111" stroke-width="2"/></svg>
<svg style="left:1735px;top:415px" width="45" height="45" viewBox="0 0 45 45"><rect width="45" height="45" fill="#d9763f"/><rect x="1.5" y="8.5" width="42" height="28" fill="#fff"/><g fill="#fff"><rect x="3" y="2.5" width="3.5" height="3.5"/><rect x="9" y="2.5" width="3.5" height="3.5"/><rect x="15" y="2.5" width="3.5" height="3.5"/><rect x="21" y="2.5" width="3.5" height="3.5"/><rect x="27" y="2.5" width="3.5" height="3.5"/><rect x="33" y="2.5" width="3.5" height="3.5"/><rect x="39" y="2.5" width="3.5" height="3.5"/><rect x="3" y="39" width="3.5" height="3.5"/><rect x="9" y="39" width="3.5" height="3.5"/><rect x="15" y="39" width="3.5" height="3.5"/><rect x="21" y="39" width="3.5" height="3.5"/><rect x="27" y="39" width="3.5" height="3.5"/><rect x="33" y="39" width="3.5" height="3.5"/><rect x="39" y="39" width="3.5" height="3.5"/></g></svg>
<svg style="left:1832px;top:416px" width="45" height="45" viewBox="0 0 45 45"><rect x="10" y="10" width="34" height="34" fill="#86c586"/><path d="M10 3H44M10 0.5V5.5M44 0.5V5.5M3 10V44M0.5 10H5.5M0.5 44H5.5" stroke="#b5b5b5" stroke-width="1.2"/><g stroke="#fff" stroke-width="2.4" fill="none"><path d="M27 17V37M17 27H37"/></g><g fill="#fff"><path d="M27 14L31.5 20H22.5Z"/><path d="M27 40L31.5 34H22.5Z"/><path d="M14 27L20 22.5V31.5Z"/><path d="M40 27L34 22.5V31.5Z"/></g><circle cx="27" cy="27" r="3.5" fill="#86c586"/></svg>
<svg style="left:1927px;top:416px" width="46" height="45" viewBox="0 0 46 45"><rect x="5" y="5" width="36" height="35" fill="#f8f8f8" stroke="#b5b5b5" stroke-width="1.2"/><g fill="#fff" stroke="#a5a5a5" stroke-width="1.2"><rect x="0.7" y="0.7" width="8" height="8"/><rect x="36.7" y="0.7" width="8" height="8"/><rect x="0.7" y="35.7" width="8" height="8"/><rect x="36.7" y="35.7" width="8" height="8"/></g><path d="M23 11 L26.2 19 L34.5 19.6 L28 25 L30.1 33.3 L23 28.7 L15.9 33.3 L18 25 L11.5 19.6 L19.8 19 Z" fill="#f0bd6a"/></svg>
<svg style="left:1710px;top:462px" width="626" height="12" viewBox="0 0 626 12"><path d="M0 10 H35 L46 1 L57 10 H626" fill="none" stroke="#d5d5d5" stroke-width="1.6"/></svg>
<div class="arr" style="left:1726px;top:486px;border:none;border-top:10px solid transparent;border-bottom:10px solid transparent;border-left:10px solid #555"></div>
<div class="t" style="left:1754px;top:483px;font-size:25.5px;font-weight:bold;color:#4a4a4a">视频</div>
<div class="arr" style="left:1726px;top:530px;border:none;border-top:10px solid transparent;border-bottom:10px solid transparent;border-left:10px solid #555"></div>
<div class="t" style="left:1754px;top:527px;font-size:25.5px;font-weight:bold;color:#4a4a4a">绿屏效果</div>
<!-- slide thumbnail -->
<div class="a" style="left:16px;top:354px;width:347px;height:201px;background:#3b83c3;border-radius:3px"></div>
<div class="a" style="left:21px;top:359px;width:337px;height:191px;background:#fff"></div>
<svg style="left:24px;top:362px" width="332" height="186"><use href="#vid" width="332" height="186"/></svg>
<div class="a" style="left:24px;top:362px;width:87px;height:24px;background:#000"></div>
<div class="t serif" style="left:27px;top:361px;font-size:22px;font-weight:bold;color:#fff">0:08.366</div>
<div class="t serif" style="left:340px;top:561px;font-size:23px;font-weight:bold;color:#444">1</div>
<!-- canvas video -->
<svg style="left:505px;top:399px" width="1094" height="614"><use href="#vid" width="1094" height="614"/></svg>
<div class="a" style="left:503.5px;top:397.5px;width:1094px;height:614px;border:2px solid #4f93d6"></div>
<div class="a" style="left:1051px;top:341px;width:2px;height:58px;background:#4a8fd0"></div>
<!-- handles -->
<svg style="left:0;top:0" width="2336" height="1408"><g fill="#6fe23f" stroke="#4a90d0" stroke-width="1.6">
<circle cx="505" cy="399" r="7.5"/><circle cx="1052" cy="399" r="7.5"/><circle cx="1599" cy="399" r="7.5"/>
<circle cx="505" cy="706" r="7.5"/><circle cx="1599" cy="706" r="7.5"/>
<circle cx="505" cy="1013" r="7.5"/><circle cx="1052" cy="1013" r="7.5"/><circle cx="1599" cy="1013" r="7.5"/>
<circle cx="1052" cy="341" r="7.5"/></g></svg>
<div class="a" style="left:405px;top:288px;width:1300px;height:50px;pointer-events:none"></div>
<!-- film icon on video -->
<svg style="left:1561px;top:975px" width="37" height="37" viewBox="0 0 37 37"><rect x="0" y="0" width="37" height="37" fill="#d9763f"/><rect x="1" y="7" width="35" height="23" fill="#fff"/><g fill="#fff"><rect x="2" y="2" width="3" height="3"/><rect x="7" y="2" width="3" height="3"/><rect x="12" y="2" width="3" height="3"/><rect x="17" y="2" width="3" height="3"/><rect x="22" y="2" width="3" height="3"/><rect x="27" y="2" width="3" height="3"/><rect x="32" y="2" width="3" height="3"/><rect x="2" y="32" width="3" height="3"/><rect x="7" y="32" width="3" height="3"/><rect x="12" y="32" width="3" height="3"/><rect x="17" y="32" width="3" height="3"/><rect x="22" y="32" width="3" height="3"/><rect x="27" y="32" width="3" height="3"/><rect x="32" y="32" width="3" height="3"/></g></svg>
<svg style="left:345px;top:536px" width="11" height="11" viewBox="0 0 37 37"><rect width="37" height="37" fill="#e8956a"/><rect x="1" y="8" width="35" height="21" fill="#fff"/></svg>
<!-- tooltip -->
<div class="a" style="left:1376px;top:712px;width:226px;height:66px;background:linear-gradient(90deg,#b9a7cc,#ab9fba 45%,#a59eb0);box-shadow:1px 2px 4px rgba(0,0,0,0.3)"></div>
<div class="t" style="left:1388.5px;top:720px;font-size:22px;color:#0c0a14">超炫VJ-10</div>
<div class="t" style="left:1388.5px;top:748.5px;font-size:22px;color:#0c0a14">持续时间: <span style="letter-spacing:1.45px;margin-left:2px">00:00:08</span></div>
<!-- thumb film icon -->
<svg style="left:54px;top:564px" width="20" height="23" viewBox="0 0 20 23"><rect x="0.5" y="0.5" width="19" height="22" fill="#d5e9f8" stroke="none"/><rect x="1" y="1" width="18" height="20" fill="#fff" stroke="#3b83c3" stroke-width="1.6"/><path d="M5 1V21M15 1V21M5 11H15M1 6H5M1 11H5M1 16H5M15 6H19M15 11H19M15 16H19" stroke="#3b83c3" stroke-width="1.6" fill="none"/></svg>
<!-- ===== timeline toolbar ===== -->
<div class="t" style="left:6px;top:1111px;font-size:22px;font-weight:bold;color:#222">时间轴</div>
<svg style="left:407px;top:1107px" width="30" height="30" viewBox="0 0 30 30"><rect x="9" y="9" width="20" height="20" fill="#cfcfcf"/><rect x="1" y="1" width="20" height="20" fill="#3b83c3"/></svg>
<div class="vsep" style="left:454px;top:1105px;height:34px;background:#c4c4c4"></div>
<svg style="left:482px;top:1110px" width="20" height="24" viewBox="0 0 20 24"><path d="M1 1L19 12L1 23Z" fill="#62b458"/></svg>
<div class="arr" style="left:519px;top:1118px;border-left-width:7px;border-right-width:7px;border-top-width:8px"></div>
<div class="a" style="left:553px;top:1110.5px;width:22px;height:22px;background:#3b83c3"></div>
<div class="vsep" style="left:596px;top:1105px;height:34px;background:#c4c4c4"></div>
<svg style="left:621px;top:1108px" width="26" height="26" viewBox="0 0 26 26"><circle cx="13" cy="13" r="12.3" fill="#d9362b"/><rect x="11" y="5" width="4" height="10" rx="2" fill="#fff"/><path d="M13 16V20M10 20.5H16" stroke="#fff" stroke-width="1.4"/></svg>
<div class="arr" style="left:661px;top:1118px;border-left-width:7px;border-right-width:7px;border-top-width:8px"></div>
<div class="vsep" style="left:690px;top:1105px;height:34px;background:#c4c4c4"></div>
<svg style="left:709px;top:1107px" width="30" height="30" viewBox="0 0 30 30"><circle cx="11" cy="11" r="9" fill="#f7f7f7" stroke="#8a8a8a" stroke-width="1.5"/><path d="M18 18L27 27" stroke="#8a8a8a" stroke-width="3.2" stroke-linecap="round"/><path d="M7 10V7H12M15 12V15H10" fill="none" stroke="#3f9db8" stroke-width="1.8"/></svg>
<svg style="left:757px;top:1107px" width="30" height="30" viewBox="0 0 30 30"><circle cx="11" cy="11" r="9" fill="#f7f7f7" stroke="#8a8a8a" stroke-width="1.5"/><path d="M18 18L27 27" stroke="#8a8a8a" stroke-width="3.2" stroke-linecap="round"/><path d="M6 11H16" stroke="#3f9db8" stroke-width="2"/></svg>
<svg style="left:805px;top:1107px" width="30" height="30" viewBox="0 0 30 30"><circle cx="11" cy="11" r="9" fill="#f7f7f7" stroke="#8a8a8a" stroke-width="1.5"/><path d="M18 18L27 27" stroke="#8a8a8a" stroke-width="3.2" stroke-linecap="round"/><path d="M6 11H16M11 6V16" stroke="#3f9db8" stroke-width="2"/></svg>
<div class="vsep" style="left:852px;top:1105px;height:34px;background:#c4c4c4"></div>
<svg style="left:871px;top:1107px" width="30" height="30" viewBox="0 0 30 30"><rect x="0" y="1" width="11" height="11" fill="#cfcfcf"/><rect x="23" y="1" width="4" height="11" fill="#cfcfcf"/><path d="M11 1V12M23 1V12" stroke="#8a8a8a" stroke-width="1.2"/><path d="M17 5V14M13.5 11L17 14.5L20.5 11" stroke="#8a8a8a" stroke-width="1.6" fill="none"/><rect x="12" y="17" width="11" height="11" fill="#9a9a9a"/></svg>
<svg style="left:919px;top:1107px" width="30" height="30" viewBox="0 0 30 30"><rect x="0" y="1" width="28" height="11" fill="#cfcfcf"/><path d="M11 1V12M23 1V12" stroke="#9a9a9a" stroke-width="1.2"/><path d="M17 5V14M13.5 11L17 14.5L20.5 11" stroke="#8a8a8a" stroke-width="1.6" fill="none"/><rect x="12" y="17" width="11" height="11" fill="#9a9a9a"/></svg>
<svg style="left:968px;top:1107px" width="30" height="30" viewBox="0 0 30 30"><rect x="0" y="1" width="11" height="11" fill="#9a9a9a"/><path d="M11 14V29" stroke="#9a9a9a" stroke-width="1.2" stroke-dasharray="3 2"/><path d="M17 15H27M18 17V28H26V17" fill="#f5f5f5" stroke="#b0b0b0" stroke-width="1.1"/><path d="M20 18V27M22 18V27M24 18V27" stroke="#b0b0b0" stroke-width="0.9"/></svg>
<svg style="left:1016px;top:1107px" width="30" height="30" viewBox="0 0 30 30"><path d="M6 0V23H29M0 6H23V29" fill="none" stroke="#8a8a8a" stroke-width="1.3"/><rect x="9" y="9" width="11" height="11" fill="#9a9a9a"/></svg>
<svg style="left:1063px;top:1107px" width="30" height="30" viewBox="0 0 30 30"><rect x="5" y="1" width="12" height="11" fill="#9a9a9a"/><rect x="18" y="17" width="10" height="11" fill="#cfcfcf"/><path d="M1 17V29M17 17V29" stroke="#8a8a8a" stroke-width="1.3"/><path d="M10 15V23M7 20L10 23.5L13 20" stroke="#8a8a8a" stroke-width="1.5" fill="none"/></svg>
<div class="vsep" style="left:1110px;top:1105px;height:34px;background:#c4c4c4"></div>
<svg style="left:1129px;top:1107px" width="31" height="30" viewBox="0 0 31 30"><g fill="#8e8e8e"><rect x="1" y="7" width="12" height="4.5"/><rect x="1" y="18.5" width="12" height="4.5"/><rect x="1" y="7" width="1.6" height="16"/></g><g fill="#f0f0f0"><rect x="2.5" y="8.3" width="2" height="2"/><rect x="6" y="8.3" width="2" height="2"/><rect x="9.5" y="8.3" width="2" height="2"/><rect x="2.5" y="19.8" width="2" height="2"/><rect x="6" y="19.8" width="2" height="2"/><rect x="9.5" y="19.8" width="2" height="2"/></g><g fill="#8e8e8e"><rect x="18" y="7" width="12" height="4.5"/><rect x="18" y="18.5" width="12" height="4.5"/><rect x="28.4" y="7" width="1.6" height="16"/></g><g fill="#f0f0f0"><rect x="19.5" y="8.3" width="2" height="2"/><rect x="23" y="8.3" width="2" height="2"/><rect x="26.5" y="8.3" width="2" height="2"/><rect x="19.5" y="19.8" width="2" height="2"/><rect x="23" y="19.8" width="2" height="2"/><rect x="26.5" y="19.8" width="2" height="2"/></g><path d="M15.5 2V28" stroke="#8e8e8e" stroke-width="1.2" stroke-dasharray="2.5 2"/><path d="M13 3.5L15.5 0.5L18 3.5M13 26.5L15.5 29.5L18 26.5" fill="#8e8e8e" stroke="#8e8e8e" stroke-width="0.8"/></svg>
<svg style="left:1177px;top:1107px" width="31" height="30" viewBox="0 0 31 30"><g fill="#8e8e8e"><rect x="1" y="7" width="12" height="4.5"/><rect x="1" y="18.5" width="12" height="4.5"/><rect x="1" y="7" width="1.6" height="16"/></g><g fill="#f0f0f0"><rect x="2.5" y="8.3" width="2" height="2"/><rect x="6" y="8.3" width="2" height="2"/><rect x="9.5" y="8.3" width="2" height="2"/><rect x="2.5" y="19.8" width="2" height="2"/><rect x="6" y="19.8" width="2" height="2"/><rect x="9.5" y="19.8" width="2" height="2"/></g><g fill="#8e8e8e"><rect x="18" y="7" width="12" height="4.5"/><rect x="18" y="18.5" width="12" height="4.5"/><rect x="28.4" y="7" width="1.6" height="16"/></g><g fill="#f0f0f0"><rect x="19.5" y="8.3" width="2" height="2"/><rect x="23" y="8.3" width="2" height="2"/><rect x="26.5" y="8.3" width="2" height="2"/><rect x="19.5" y="19.8" width="2" height="2"/><rect x="23" y="19.8" width="2" height="2"/><rect x="26.5" y="19.8" width="2" height="2"/></g><path d="M9 15H17" stroke="#8e8e8e" stroke-width="1.8"/><path d="M16 11.5L20 15L16 18.5Z" fill="#8e8e8e"/></svg>
<svg style="left:1225px;top:1106px" width="32" height="32" viewBox="0 0 32 32"><circle cx="23.5" cy="4.5" r="3.8" fill="#e37a45"/><path d="M10 11 L18.5 9 L22.5 14.5 L28 13 M18.5 9 L14.5 18.5 L20.5 22 L18 30 M14.5 18.5 L10 23.5 L3.5 23.5" fill="none" stroke="#e37a45" stroke-width="4.4" stroke-linecap="round" stroke-linejoin="round"/><path d="M1 15.5H8M1 29.5H13" stroke="#e37a45" stroke-width="1.8"/></svg>
<svg style="left:1277px;top:1108px" width="22" height="28" viewBox="0 0 22 28"><path d="M11 1 C14 9 21 14 21 19 A10 10 0 0 1 1 19 C1 14 8 9 11 1Z" fill="#c4c4c4"/></svg>
<svg style="left:1325px;top:1106px" width="30" height="30" viewBox="0 0 30 30"><path d="M0 10H5V20H0Z M6 10L16 1V29L6 20Z" fill="#3b83c3"/><path d="M19 9 A7 7 0 0 1 19 21 M21 5 A11 11 0 0 1 21 25" fill="none" stroke="#8a8a8a" stroke-width="1.5"/></svg>
<div class="arr" style="left:1367px;top:1118px;border-left-width:7px;border-right-width:7px;border-top-width:8px"></div>
<svg style="left:1397px;top:1107px" width="30" height="30" viewBox="0 0 30 30"><rect x="0.7" y="0.7" width="28" height="28" fill="#fff" stroke="#8a8a8a" stroke-width="1.3"/><path d="M3 27H27V6Z" fill="#3b83c3"/></svg>
<svg style="left:1445px;top:1107px" width="30" height="30" viewBox="0 0 30 30"><rect x="0.7" y="0.7" width="28" height="28" fill="#fff" stroke="#8a8a8a" stroke-width="1.3"/><path d="M3 27H27L3 6Z" fill="#3b83c3"/></svg>
<svg style="left:1499px;top:1107px" width="26" height="30" viewBox="0 0 26 30"><path d="M2 18V29M7 12V29M12 6V29M17 0V29M22 14V29" stroke="#a0a0a0" stroke-width="2.2"/></svg>
<div class="arr arrg" style="left:1539px;top:1118px;border-left-width:7px;border-right-width:7px;border-top-width:8px;border-top-color:#a5a5a5"></div>
<svg style="left:1571px;top:1107px" width="28" height="30" viewBox="0 0 28 30"><path d="M0 2H20" stroke="#8a8a8a" stroke-width="1.4"/><rect x="23" y="0.5" width="3" height="3" fill="#8a8a8a"/><path d="M5 15V29M10 4V29M15 20V29" stroke="#9a9a9a" stroke-width="2.2"/></svg>
<div class="vsep" style="left:1616px;top:1105px;height:34px;background:#c4c4c4"></div>
<div class="a" style="left:1672px;top:1118px;width:16px;height:2px;background:#444"></div>
<div class="arr" style="left:1673px;top:1122px;border-left-width:7px;border-right-width:7px;border-top-width:8px"></div>
<!-- ===== timeline rows ===== -->
<div class="a" style="left:0;top:1152px;width:399px;height:1.5px;background:#d5d5d5"></div>
<div class="a" style="left:0;top:1152px;width:399px;height:51px;background:#ebebeb;border-top:1.5px solid #d8d8d8;border-bottom:1.5px solid #d0d0d0;box-sizing:border-box"></div>
<div class="a" style="left:0;top:1203px;width:399px;height:169px;background:#ececec"></div>
<div class="a" style="left:2px;top:1252px;width:397px;height:45px;background:#d0d0d0"></div>
<div class="a" style="left:0;top:1296.5px;width:399px;height:1.5px;background:#dcdcdc"></div>
<div class="a" style="left:0;top:1340px;width:399px;height:1.5px;background:#dcdcdc"></div>
<div class="a" style="left:398px;top:1152px;width:1.5px;height:220px;background:#dadada"></div>
<div class="t tl" style="left:40px;top:1161px">主时间轴</div>
<div class="arr" style="left:245px;top:1172px;border-left-width:10px;border-right-width:10px;border-top-width:11px;border-top-color:#b0b0b0"></div>
<div class="a" style="left:280px;top:1161px;width:1.5px;height:30px;background:#dcdcdc"></div>
<div class="t tl" style="left:40px;top:1218px">幻灯片</div>
<div class="t tl" style="left:40px;top:1261px">超炫VJ-10</div>
<div class="t tl" style="left:40px;top:1306px">文本占位符_2</div>
<div class="t tl" style="left:40px;top:1350px">标题占位符_1</div>
<!-- track area -->
<div class="a" style="left:400px;top:1204px;width:10px;height:168px;background:#fff"></div>
<div class="a" style="left:410px;top:1207px;width:837px;height:165px;background:#ebebeb;border:1.5px solid #d2d2d2;border-bottom:none;box-sizing:border-box"></div>
<div class="a" style="left:1247px;top:1204px;width:418px;height:168px;background:#fff"></div>
<div class="a" style="left:1665px;top:1204px;width:29px;height:168px;background:#f6f6f6"></div>
<div class="a" style="left:411px;top:1252px;width:836px;height:45px;background:#cfcfcf"></div>
<div class="a" style="left:412px;top:1273px;width:834px;height:2.5px;background:#6a9ccb"></div>
<div class="a" style="left:1247px;top:1252px;width:418px;height:1.5px;background:#d0d0d0"></div>
<div class="a" style="left:1247px;top:1296px;width:418px;height:1.5px;background:#d0d0d0"></div>
<div class="a" style="left:1247px;top:1340px;width:418px;height:1.5px;background:#d0d0d0"></div>
<div class="a" style="left:411px;top:1340px;width:836px;height:2px;background:#cdcdcd"></div>
<div class="a" style="left:1245.5px;top:1207px;width:2px;height:165px;background:#c8c8c8"></div>
<div class="a" style="left:710px;top:1214px;width:2px;height:33px;background:#e2483a"></div>
<div class="a" style="left:1672px;top:1210px;width:16px;height:130px;border-radius:8px;background:#c2c2c2"></div>
<!-- ===== timeline ruler ===== -->
<div class="a" style="left:400px;top:1152px;width:1294px;height:51px;background:#ebebeb;border-top:1.5px solid #d6d6d6;box-sizing:border-box"></div>
<svg style="left:0;top:0" width="2336" height="1408"><path d="M410.0 1178V1203 M510.0 1178V1203 M610.0 1178V1203 M710.0 1178V1203 M810.0 1178V1203 M910.0 1178V1203 M1010.0 1178V1203 M1110.0 1178V1203 M1210.0 1178V1203 M1310.0 1178V1203 M1410.0 1178V1203 M1510.0 1178V1203 M1610.0 1178V1203" stroke="#777" stroke-width="1.5" fill="none"/><path d="M460.0 1186V1203 M560.0 1186V1203 M660.0 1186V1203 M760.0 1186V1203 M860.0 1186V1203 M960.0 1186V1203 M1060.0 1186V1203 M1160.0 1186V1203 M1260.0 1186V1203 M1360.0 1186V1203 M1460.0 1186V1203 M1560.0 1186V1203 M1660.0 1186V1203" stroke="#777" stroke-width="1.3" fill="none"/><path d="M420.0 1193V1203 M430.0 1193V1203 M440.0 1193V1203 M450.0 1193V1203 M470.0 1193V1203 M480.0 1193V1203 M490.0 1193V1203 M500.0 1193V1203 M520.0 1193V1203 M530.0 1193V1203 M540.0 1193V1203 M550.0 1193V1203 M570.0 1193V1203 M580.0 1193V1203 M590.0 1193V1203 M600.0 1193V1203 M620.0 1193V1203 M630.0 1193V1203 M640.0 1193V1203 M650.0 1193V1203 M670.0 1193V1203 M680.0 1193V1203 M690.0 1193V1203 M700.0 1193V1203 M720.0 1193V1203 M730.0 1193V1203 M740.0 1193V1203 M750.0 1193V1203 M770.0 1193V1203 M780.0 1193V1203 M790.0 1193V1203 M800.0 1193V1203 M820.0 1193V1203 M830.0 1193V1203 M840.0 1193V1203 M850.0 1193V1203 M870.0 1193V1203 M880.0 1193V1203 M890.0 1193V1203 M900.0 1193V1203 M920.0 1193V1203 M930.0 1193V1203 M940.0 1193V1203 M950.0 1193V1203 M970.0 1193V1203 M980.0 1193V1203 M990.0 1193V1203 M1000.0 1193V1203 M1020.0 1193V1203 M1030.0 1193V1203 M1040.0 1193V1203 M1050.0 1193V1203 M1070.0 1193V1203 M1080.0 1193V1203 M1090.0 1193V1203 M1100.0 1193V1203 M1120.0 1193V1203 M1130.0 1193V1203 M1140.0 1193V1203 M1150.0 1193V1203 M1170.0 1193V1203 M1180.0 1193V1203 M1190.0 1193V1203 M1200.0 1193V1203 M1220.0 1193V1203 M1230.0 1193V1203 M1240.0 1193V1203 M1250.0 1193V1203 M1270.0 1193V1203 M1280.0 1193V1203 M1290.0 1193V1203 M1300.0 1193V1203 M1320.0 1193V1203 M1330.0 1193V1203 M1340.0 1193V1203 M1350.0 1193V1203 M1370.0 1193V1203 M1380.0 1193V1203 M1390.0 1193V1203 M1400.0 1193V1203 M1420.0 1193V1203 M1430.0 1193V1203 M1440.0 1193V1203 M1450.0 1193V1203 M1470.0 1193V1203 M1480.0 1193V1203 M1490.0 1193V1203 M1500.0 1193V1203 M1520.0 1193V1203 M1530.0 1193V1203 M1540.0 1193V1203 M1550.0 1193V1203 M1570.0 1193V1203 M1580.0 1193V1203 M1590.0 1193V1203 M1600.0 1193V1203 M1620.0 1193V1203 M1630.0 1193V1203 M1640.0 1193V1203 M1650.0 1193V1203 M1670.0 1193V1203 M1680.0 1193V1203 M1690.0 1193V1203" stroke="#8a8a8a" stroke-width="1.2" fill="none"/><path d="M400 1203.5H1694" stroke="#9a9a9a" stroke-width="1.4"/></svg>
<div class="t rt" style="left:409px;top:1154px">0:00</div>
<div class="t rt" style="left:480px;top:1154px;width:60px;text-align:center">0:01</div>
<div class="t rt" style="left:580px;top:1154px;width:60px;text-align:center">0:02</div>
<div class="t rt" style="left:680px;top:1154px;width:60px;text-align:center">0:03</div>
<div class="t rt" style="left:780px;top:1154px;width:60px;text-align:center">0:04</div>
<div class="t rt" style="left:880px;top:1154px;width:60px;text-align:center">0:05</div>
<div class="t rt" style="left:980px;top:1154px;width:60px;text-align:center">0:06</div>
<div class="t rt" style="left:1080px;top:1154px;width:60px;text-align:center">0:07</div>
<div class="t rt" style="left:1180px;top:1154px;width:60px;text-align:center">0:08</div>
<div class="t rt" style="left:1280px;top:1154px;width:60px;text-align:center">0:09</div>
<div class="t rt" style="left:1380px;top:1154px;width:60px;text-align:center">0:10</div>
<div class="t rt" style="left:1480px;top:1154px;width:60px;text-align:center">0:11</div>
<div class="t rt" style="left:1580px;top:1154px;width:60px;text-align:center">0:12</div>
<!-- eye / lock icons -->
<svg style="left:313px;top:1169px" width="30" height="18" viewBox="0 0 30 18"><path d="M8 5 Q18 -3 30 9 Q22 16 16 16Z" fill="#cfcfcf"/><path d="M1 9 Q14 -5 27 9 Q14 22 1 9Z" fill="#8c8c8c"/><circle cx="14" cy="8.5" r="5.6" fill="#f0f0f0"/><circle cx="14" cy="8.5" r="3.6" fill="#8c8c8c"/><circle cx="15.6" cy="7" r="1.3" fill="#f0f0f0"/></svg>
<svg style="left:364px;top:1166px" width="28" height="24" viewBox="0 0 28 24"><rect x="12" y="7" width="12" height="11" fill="#d0d0d0"/><path d="M14 8V5A4 4 0 0 1 22 5V8" fill="none" stroke="#d0d0d0" stroke-width="1.6"/><rect x="1" y="11" width="16" height="12" fill="#8c8c8c"/><rect x="7.5" y="14.5" width="3" height="5" fill="#f0f0f0"/><path d="M4 11V8A5 5 0 0 1 14 8V11" fill="none" stroke="#8c8c8c" stroke-width="1.6"/></svg>
<svg style="left:313px;top:1265px" width="30" height="18" viewBox="0 0 30 18"><path d="M1 9 Q14 -5 27 9 Q14 22 1 9Z" fill="#8c8c8c"/><circle cx="14" cy="8.5" r="5.6" fill="#f0f0f0"/><circle cx="14" cy="8.5" r="3.6" fill="#8c8c8c"/><circle cx="15.6" cy="7" r="1.3" fill="#f0f0f0"/></svg>
<svg style="left:364px;top:1262px" width="28" height="24" viewBox="0 0 28 24"><path d="M15 12V6A5 5 0 0 1 25 6V8" fill="none" stroke="#a8a8a8" stroke-width="1.5"/><rect x="1" y="11" width="16" height="12" fill="#8c8c8c"/><rect x="7.5" y="14.5" width="3" height="5" fill="#f0f0f0"/></svg>
<svg style="left:313px;top:1309px" width="30" height="18" viewBox="0 0 30 18"><path d="M1 9 Q14 -5 27 9 Q14 22 1 9Z" fill="#8c8c8c"/><circle cx="14" cy="8.5" r="5.6" fill="#f0f0f0"/><circle cx="14" cy="8.5" r="3.6" fill="#8c8c8c"/><circle cx="15.6" cy="7" r="1.3" fill="#f0f0f0"/></svg>
<svg style="left:364px;top:1306px" width="28" height="24" viewBox="0 0 28 24"><path d="M15 12V6A5 5 0 0 1 25 6V8" fill="none" stroke="#a8a8a8" stroke-width="1.5"/><rect x="1" y="11" width="16" height="12" fill="#8c8c8c"/><rect x="7.5" y="14.5" width="3" height="5" fill="#f0f0f0"/></svg>
<svg style="left:313px;top:1353px" width="30" height="18" viewBox="0 0 30 18"><path d="M1 9 Q14 -5 27 9 Q14 22 1 9Z" fill="#8c8c8c"/><circle cx="14" cy="8.5" r="5.6" fill="#f0f0f0"/><circle cx="14" cy="8.5" r="3.6" fill="#8c8c8c"/><circle cx="15.6" cy="7" r="1.3" fill="#f0f0f0"/></svg>
<svg style="left:364px;top:1350px" width="28" height="24" viewBox="0 0 28 24"><path d="M15 12V6A5 5 0 0 1 25 6V8" fill="none" stroke="#a8a8a8" stroke-width="1.5"/><rect x="1" y="11" width="16" height="12" fill="#8c8c8c"/><rect x="7.5" y="14.5" width="3" height="5" fill="#f0f0f0"/></svg>
<!-- ===== status bar ===== -->
<div class="a" style="left:0;top:1372px;width:2336px;height:36px;background:#3b83c3"></div>
<div class="t" style="left:14.5px;top:1383px;font-size:21px;font-weight:500;color:#fff">幻灯片： 1/1</div>
<div class="a" style="left:1933px;top:1394px;width:18px;height:4px;background:#fff"></div>
<div class="a" style="left:1961px;top:1395px;width:214px;height:2px;background:#fff"></div>
<div class="a" style="left:1995px;top:1383px;width:9px;height:25px;background:#fff"></div>
<div class="a" style="left:2067px;top:1390px;width:2px;height:12px;background:#fff"></div>
<div class="a" style="left:2185px;top:1394px;width:18px;height:4px;background:#fff"></div>
<div class="a" style="left:2192px;top:1387px;width:4px;height:18px;background:#fff"></div>
<div class="t" style="left:2234px;top:1384px;font-size:24px;font-weight:bold;color:#fff">43%</div>
<svg style="left:2308px;top:1382px" width="28" height="26" viewBox="0 0 28 26"><rect x="0.8" y="0.8" width="28" height="28" fill="none" stroke="#fff" stroke-width="1.6"/><g fill="#fff"><path d="M14 3L18 7H10Z"/><path d="M14 26L18 22H10Z"/><path d="M3 15L7 11V19Z"/><path d="M26 15L22 11V19Z"/></g></svg>
</body></html>
